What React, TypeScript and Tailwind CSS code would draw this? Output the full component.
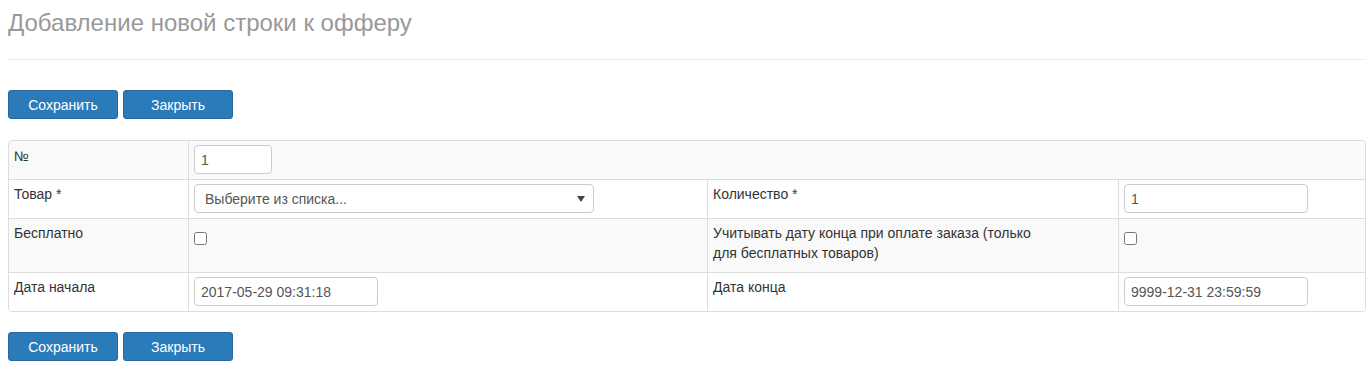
import React from 'react';

const font = { fontFamily: '"Liberation Sans", Arial, sans-serif' };

const Buttons: React.FC = () => (
  <div className="flex gap-[5px]">
    <button className="w-[110px] h-[29px] rounded-[3px] bg-[#2b7bba] border border-[#2867a0] text-white text-[14px] leading-[20px]">
      Сохранить
    </button>
    <button className="w-[110px] h-[29px] rounded-[3px] bg-[#2b7bba] border border-[#2867a0] text-white text-[14px] leading-[20px]">
      Закрыть
    </button>
  </div>
);

const TextInput: React.FC<{ value: string; width: string }> = ({ value, width }) => (
  <input
    type="text"
    defaultValue={value}
    className={`${width} h-[29px] border border-[#ccc] rounded-[4px] bg-white px-[6px] text-[14px] text-[#555] outline-none`}
  />
);

const App: React.FC = () => {
  return (
    <div className="bg-white min-h-[374px] pl-2 pr-[6px] text-[#333] text-[14px] leading-[20px]" style={font}>
      <div className="pt-[10px] pb-[23px] border-b border-[#eee]">
        <h1 className="text-[24px] leading-[26px] text-[#999] font-normal">Добавление новой строки к офферу</h1>
      </div>

      <div className="pt-[30px]">
        <Buttons />
      </div>

      <div className="mt-[21px] border border-[#ddd] rounded-[4px] overflow-hidden">
        {/* № */}
        <div className="flex h-[38px] bg-[#f9f9f9]">
          <div className="w-[179px] px-[5px] pt-[5px]">№</div>
          <div className="flex-1 border-l border-[#ddd] px-[5px] pt-[4px]">
            <TextInput value="1" width="w-[78px]" />
          </div>
        </div>

        {/* Товар / Количество */}
        <div className="flex h-[39px] border-t border-[#ddd] bg-white">
          <div className="w-[179px] px-[5px] pt-[4px]">Товар *</div>
          <div className="w-[519px] border-l border-[#ddd] px-[5px] pt-[4px]">
            <div className="relative w-[400px] h-[29px] border border-[#ccc] rounded-[4px] bg-white">
              <span className="absolute left-[10px] top-[4px] text-[#555]">Выберите из списка...</span>
              <span className="absolute right-[8px] top-[11px] w-0 h-0 border-l-[4px] border-r-[4px] border-t-[6px] border-l-transparent border-r-transparent border-t-[#444]" />
            </div>
          </div>
          <div className="w-[411px] border-l border-[#ddd] px-[5px] pt-[4px]">Количество *</div>
          <div className="flex-1 border-l border-[#ddd] px-[5px] pt-[4px]">
            <TextInput value="1" width="w-[184px]" />
          </div>
        </div>

        {/* Бесплатно */}
        <div className="flex h-[54px] border-t border-[#ddd] bg-[#f9f9f9]">
          <div className="w-[179px] px-[5px] pt-[4px]">Бесплатно</div>
          <div className="w-[519px] border-l border-[#ddd] px-[5px] pt-[13px]">
            <input type="checkbox" className="block m-0 w-[13px] h-[13px]" />
          </div>
          <div className="w-[411px] border-l border-[#ddd] px-[5px] pt-[4px]">
            Учитывать дату конца при оплате заказа (только
            <br />
            для бесплатных товаров)
          </div>
          <div className="flex-1 border-l border-[#ddd] px-[5px] pt-[13px]">
            <input type="checkbox" className="block m-0 w-[13px] h-[13px]" />
          </div>
        </div>

        {/* Даты */}
        <div className="flex h-[39px] border-t border-[#ddd] bg-white">
          <div className="w-[179px] px-[5px] pt-[4px]">Дата начала</div>
          <div className="w-[519px] border-l border-[#ddd] px-[5px] pt-[4px]">
            <TextInput value="2017-05-29 09:31:18" width="w-[184px]" />
          </div>
          <div className="w-[411px] border-l border-[#ddd] px-[5px] pt-[4px]">Дата конца</div>
          <div className="flex-1 border-l border-[#ddd] px-[5px] pt-[4px]">
            <TextInput value="9999-12-31 23:59:59" width="w-[184px]" />
          </div>
        </div>
      </div>

      <div className="pt-[20px]">
        <Buttons />
      </div>
    </div>
  );
};

export default App;
